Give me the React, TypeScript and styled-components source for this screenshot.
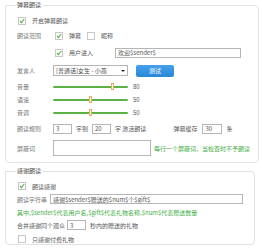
import styled, { createGlobalStyle } from 'styled-components';

const GlobalStyle = createGlobalStyle`
  html, body {
    margin: 0;
    padding: 0;
    background: #fff;
  }
  body {
    font-family: "Noto Sans CJK SC", "DejaVu Sans", sans-serif;
    font-size: 6px;
    color: #555;
  }
`;

const Page = styled.div`
  width: 263px;
  height: 250px;
  box-sizing: border-box;
  padding: 0 8px 0 5px;
  display: flex;
  flex-direction: column;
  gap: 3px;
`;

const Group = styled.fieldset<{ $height: number }>`
  margin: 0;
  padding: 4px 8px 0 11px;
  height: ${(p) => p.$height}px;
  box-sizing: border-box;
  border: 1px solid #e2e2e2;
  border-radius: 0 4px 4px 4px;
  display: flex;
  flex-direction: column;
`;

const Legend = styled.legend`
  padding: 0 2px 0 1px;
  margin-left: -1px;
  font-size: 6px;
  line-height: 10px;
  color: #444;
`;

const Row = styled.div<{ $h?: number; $indent?: number }>`
  display: flex;
  align-items: center;
  height: ${(p) => p.$h ?? 14}px;
  padding-left: ${(p) => p.$indent ?? 0}px;
  white-space: nowrap;
`;

const Label = styled.span<{ $w?: number }>`
  width: ${(p) => p.$w ?? 36}px;
  flex-shrink: 0;
  color: #777;
`;

const Text = styled.span<{ $ml?: number }>`
  margin-left: ${(p) => p.$ml ?? 0}px;
`;

const Hint = styled.span<{ $ml?: number }>`
  margin-left: ${(p) => p.$ml ?? 0}px;
  color: #3fae3f;
`;

const BoxWrap = styled.span<{ $ml?: number }>`
  display: inline-flex;
  align-items: center;
  margin-left: ${(p) => p.$ml ?? 0}px;
  margin-right: 6px;
  width: 6px;
  height: 6px;
  border: 1px solid #c8c8c8;
  background: #fff;
  flex-shrink: 0;
  svg {
    display: block;
  }
`;

const Check = ({ on = true, ml }: { on?: boolean; ml?: number }) => (
  <BoxWrap $ml={ml}>
    {on && (
      <svg width="6" height="6" viewBox="0 0 6 6">
        <path d="M1 3 L2.5 4.6 L5.2 1" stroke="#59b34a" strokeWidth="1.1" fill="none" />
      </svg>
    )}
  </BoxWrap>
);

const Field = styled.div<{ $w: number; $h?: number; $ml?: number }>`
  width: ${(p) => p.$w}px;
  height: ${(p) => p.$h ?? 10}px;
  margin-left: ${(p) => p.$ml ?? 0}px;
  box-sizing: border-box;
  border: 1px solid #b5b5b5;
  background: #fff;
  padding: 0 2px;
  display: flex;
  align-items: center;
  color: #555;
  overflow: hidden;
  flex-shrink: 0;
`;

const Select = styled(Field)`
  justify-content: space-between;
  color: #444;
  &::after {
    content: '';
    border-left: 2px solid transparent;
    border-right: 2px solid transparent;
    border-top: 2px solid #222;
  }
`;

const Button = styled.div`
  width: 38px;
  height: 12px;
  margin-left: 8px;
  border-radius: 2px;
  background: linear-gradient(#46a0ec, #2a86d6);
  color: #fff;
  display: flex;
  align-items: center;
  justify-content: center;
`;

const Track = styled.div`
  position: relative;
  width: 75px;
  height: 2px;
  background: #5db245;
  border-radius: 1px;
  flex-shrink: 0;
`;

const Thumb = styled.span`
  position: absolute;
  top: -3px;
  width: 3px;
  height: 7px;
  margin-left: -2px;
  box-sizing: border-box;
  border: 1px solid #e0b060;
  background: #fdf6d8;
`;

const Value = styled.span`
  margin-left: 5px;
  color: #555;
`;

const Spacer = styled.span<{ $w: number }>`
  width: ${(p) => p.$w}px;
  flex-shrink: 0;
`;

const Slider = ({ label, value }: { label: string; value: number }) => (
  <Row $h={13}>
    <Label>{label}</Label>
    <Track>
      <Thumb style={{ left: `${value}%` }} />
    </Track>
    <Value>{value}</Value>
  </Row>
);

export default function App() {
  return (
    <>
      <GlobalStyle />
      <Page>
        <Group $height={163}>
          <Legend>弹幕朗读</Legend>
          <Row $h={13}>
            <Check ml={1} />
            <Text>开启弹幕朗读</Text>
          </Row>
          <Row $h={17}>
            <Label>朗读范围</Label>
            <Check ml={2} />
            <Text>弹幕</Text>
            <Check on={false} ml={6} />
            <Text>昵称</Text>
          </Row>
          <Row $h={17}>
            <Spacer $w={36} />
            <Check ml={2} />
            <Text>用户进入</Text>
            <Field $w={126} $ml={22}>欢迎$sender$</Field>
          </Row>
          <Row $h={19}>
            <Label>发言人</Label>
            <Select $w={75} $h={11}>[普通话]女生 - 小燕</Select>
            <Button>测试</Button>
          </Row>
          <Slider label="音量" value={80} />
          <Slider label="语速" value={50} />
          <Slider label="音调" value={50} />
          <Row $h={19}>
            <Label>朗读规则</Label>
            <Field $w={19}>3</Field>
            <Text $ml={4}>字到</Text>
            <Field $w={19} $ml={4}>20</Field>
            <Text $ml={4}>字 激活朗读</Text>
            <Text $ml={27}>弹幕缓存</Text>
            <Field $w={20} $ml={5}>30</Field>
            <Text $ml={4}>条</Text>
          </Row>
          <Row $h={20}>
            <Label>屏蔽词</Label>
            <Field $w={98} $h={16} />
            <Hint $ml={3}>每行一个屏蔽词，当检查时不予朗读</Hint>
          </Row>
        </Group>
        <Group $height={79}>
          <Legend>感谢朗读</Legend>
          <Row $h={12}>
            <Check ml={1} />
            <Text>朗读感谢</Text>
          </Row>
          <Row $h={14}>
            <Label $w={33}>朗读字符串</Label>
            <Field $w={193}>感谢$sender$赠送的$num$个$gift$</Field>
          </Row>
          <Row $h={12}>
            <Hint>其中,$sender$代表用户名,$gift$代表礼物名称,$num$代表赠送数量</Hint>
          </Row>
          <Row $h={14}>
            <Text>合并感谢同个观众</Text>
            <Field $w={19} $ml={2}>3</Field>
            <Text $ml={4}>秒内的赠送的礼物</Text>
          </Row>
          <Row $h={14}>
            <Check on={false} ml={1} />
            <Text>只感谢付费礼物</Text>
          </Row>
        </Group>
      </Page>
    </>
  );
}
